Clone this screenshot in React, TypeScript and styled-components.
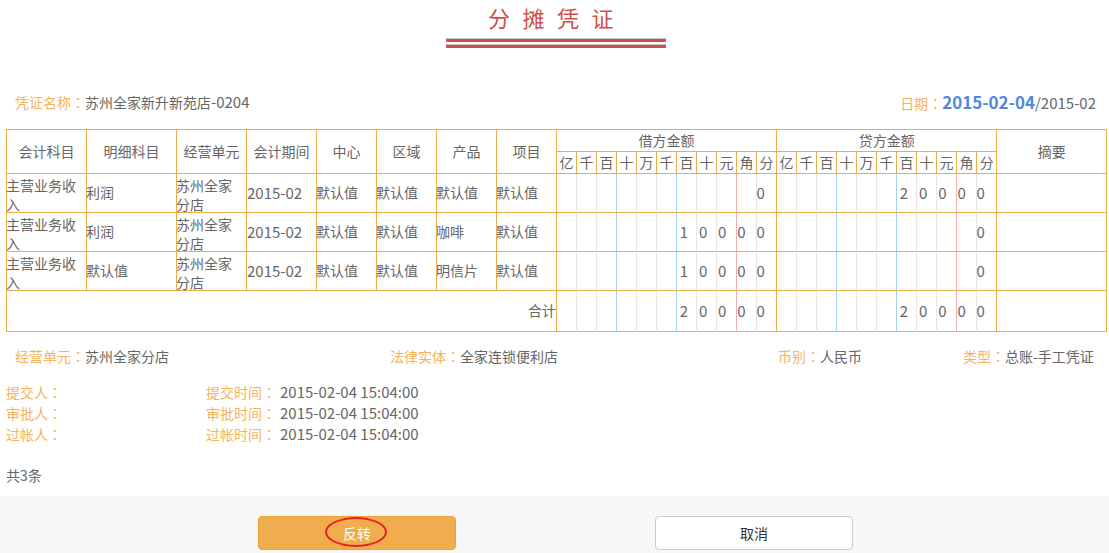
import styled, { createGlobalStyle } from "styled-components";

const ORANGE = "#f0ad45";
const LABEL = "#f7b35c";
const TEXT = "#666";

const GlobalStyle = createGlobalStyle`
  html, body {
    margin: 0;
    padding: 0;
    background: #fff;
  }
  body {
    font-family: "Noto Sans CJK SC", "Liberation Sans", sans-serif;
    font-size: 14px;
    color: ${TEXT};
  }
`;

const digitNames = ["亿", "千", "百", "十", "万", "千", "百", "十", "元", "角", "分"];

type voucherRow = {
  subject: string;
  detail: string;
  product: string;
  debit: string[];
  credit: string[];
};

const pad = (digits: string) => {
  const cells = new Array(11 - digits.length).fill("");
  return [...cells, ...digits.split("")];
};

const rows: voucherRow[] = [
  { subject: "主营业务收入", detail: "利润", product: "默认值", debit: pad("0"), credit: pad("20000") },
  { subject: "主营业务收入", detail: "利润", product: "咖啡", debit: pad("10000"), credit: pad("0") },
  { subject: "主营业务收入", detail: "默认值", product: "明信片", debit: pad("10000"), credit: pad("0") },
];

const columnWidths = [80, 90, 70, 70, 60, 60, 60, 60];

function FieldLabel({ text }: { text: string }) {
  return (
    <Label>
      {text}
      <Colon>：</Colon>
    </Label>
  );
}

function AmountCells({ digits }: { digits: string[] }) {
  return (
    <>
      {digits.map((digit, i) => (
        <AmountCell key={i} $index={i}>
          {digit}
        </AmountCell>
      ))}
    </>
  );
}

function App() {
  return (
    <Page>
      <GlobalStyle />
      <TitleBlock>
        <Title>分摊凭证</Title>
        <TitleRule />
        <TitleRule />
      </TitleBlock>

      <VoucherMeta>
        <div>
          <FieldLabel text="凭证名称" />
          苏州全家新升新苑店<Num>-0204</Num>
        </div>
        <div>
          <FieldLabel text="日期" />
          <DateValue>2015-02-04</DateValue>
          <Num>/2015-02</Num>
        </div>
      </VoucherMeta>

      <VoucherTable>
        <colgroup>
          {columnWidths.map((w, i) => (
            <col key={i} style={{ width: w }} />
          ))}
          {new Array(22).fill(0).map((_, i) => (
            <col key={i} style={{ width: 20 }} />
          ))}
          <col style={{ width: 110 }} />
        </colgroup>
        <thead>
          <tr>
            {["会计科目", "明细科目", "经营单元", "会计期间", "中心", "区域", "产品", "项目"].map((h) => (
              <HeadCell key={h} rowSpan={2}>
                {h}
              </HeadCell>
            ))}
            <GroupCell colSpan={11}>借方金额</GroupCell>
            <GroupCell colSpan={11}>贷方金额</GroupCell>
            <HeadCell rowSpan={2}>摘要</HeadCell>
          </tr>
          <tr>
            {[...digitNames, ...digitNames].map((name, i) => (
              <DigitHead key={i}>{name}</DigitHead>
            ))}
          </tr>
        </thead>
        <tbody>
          {rows.map((row, i) => (
            <DataRow key={i}>
              <BodyCell>
                <WrapText>{row.subject}</WrapText>
              </BodyCell>
              <BodyCell>{row.detail}</BodyCell>
              <BodyCell>
                <WrapText>苏州全家分店</WrapText>
              </BodyCell>
              <PeriodCell>
                <Num>2015-02</Num>
              </PeriodCell>
              <BodyCell>默认值</BodyCell>
              <BodyCell>默认值</BodyCell>
              <BodyCell>{row.product}</BodyCell>
              <BodyCell>默认值</BodyCell>
              <AmountCells digits={row.debit} />
              <AmountCells digits={row.credit} />
              <BodyCell />
            </DataRow>
          ))}
          <TotalRow>
            <TotalLabel colSpan={8}>合计</TotalLabel>
            <AmountCells digits={pad("20000")} />
            <AmountCells digits={pad("20000")} />
            <BodyCell />
          </TotalRow>
        </tbody>
      </VoucherTable>

      <InfoRow>
        <div>
          <FieldLabel text="经营单元" />
          苏州全家分店
        </div>
        <div>
          <FieldLabel text="法律实体" />
          全家连锁便利店
        </div>
        <div>
          <FieldLabel text="币别" />
          人民币
        </div>
        <div>
          <FieldLabel text="类型" />
          总账-手工凭证
        </div>
      </InfoRow>

      <AuditList>
        {["提交", "审批", "过帐"].map((action) => (
          <AuditRow key={action}>
            <FieldLabel text={`${action}人`} />
            <div>
              <FieldLabel text={`${action}时间`} />
              <AuditTime>2015-02-04 15:04:00</AuditTime>
            </div>
          </AuditRow>
        ))}
      </AuditList>

      <RecordCount>共3条</RecordCount>

      <Footer>
        <PrimaryButton>
          反转
          <Annotation />
        </PrimaryButton>
        <CancelButton>取消</CancelButton>
      </Footer>
    </Page>
  );
}

export default App;

const Page = styled.div`
  width: 1109px;
  height: 553px;
  overflow: hidden;
  display: flex;
  flex-direction: column;
`;

const TitleBlock = styled.div`
  width: 220px;
  margin-left: 446px;
  display: flex;
  flex-direction: column;
`;

const Title = styled.h1`
  margin: 0;
  height: 38px;
  font-size: 22px;
  line-height: 35px;
  font-weight: 400;
  letter-spacing: 12.5px;
  padding-left: 42px;
  white-space: nowrap;
  color: #cf4d4b;
`;

const TitleRule = styled.div`
  height: 3px;
  background: #c9504d;
  border-top: 1px solid #c8c8c8;
  margin-bottom: 2px;
`;

const VoucherMeta = styled.div`
  margin-top: 39px;
  height: 24px;
  padding: 0 13px 0 15px;
  display: flex;
  justify-content: space-between;
  align-items: center;
`;

const Label = styled.span`
  color: ${LABEL};
`;

const Colon = styled.span`
  font-family: "Noto Sans CJK TC", sans-serif;
`;

const Num = styled.span`
  font-size: 15px;
`;

const DateValue = styled.span`
  font-size: 17px;
  font-weight: 700;
  color: #4f88dc;
`;

const VoucherTable = styled.table`
  margin: 16px 0 0 6px;
  width: 1101px;
  table-layout: fixed;
  border-collapse: separate;
  border-spacing: 0;
  border-top: 1px solid ${ORANGE};
  border-left: 1px solid ${ORANGE};
`;

const HeadCell = styled.th`
  border-right: 1px solid ${ORANGE};
  border-bottom: 1px solid ${ORANGE};
  padding: 0 0 1px;
  font-weight: 400;
  text-align: center;
`;

const GroupCell = styled(HeadCell)`
  height: 20px;
`;

const DigitHead = styled(HeadCell)`
  height: 20px;
`;

const DataRow = styled.tr`
  height: 39px;
`;

const TotalRow = styled.tr`
  height: 41px;
`;

const BodyCell = styled.td`
  border-right: 1px solid ${ORANGE};
  border-bottom: 1px solid ${ORANGE};
  padding: 0 0 1px;
  line-height: 19px;
  word-break: break-all;
  text-indent: -1px;
`;

const PeriodCell = styled(BodyCell)`
  text-indent: 0;
`;

const WrapText = styled.div`
  box-sizing: border-box;
  height: 37px;
  margin: 0 1px 0 -1px;
  padding-top: 1.5px;
  line-height: 19.5px;
  text-indent: 0;
`;

const TotalLabel = styled(BodyCell)`
  text-align: right;
  text-indent: 0;
`;

const amountLine = (index: number) => {
  if (index === 2 || index === 5) return "#9fd3f2";
  if (index === 8) return "#f2b0b0";
  if (index === 10) return ORANGE;
  return "#e6e6e6";
};

// the digits in the reference sit a little tighter than the 20px cells
const AmountCell = styled.td<{ $index: number }>`
  padding: 0 0 1px;
  font-size: 15px;
  border-bottom: 1px solid ${ORANGE};
  border-right: 1px solid ${({ $index }) => amountLine($index)};
  text-indent: ${({ $index }) => (10 - $index) * 0.8 - 0.5 + "px"};
`;

const InfoRow = styled.div`
  margin-top: 12px;
  padding-left: 15px;
  height: 24px;
  display: grid;
  grid-template-columns: 375px 388px 185px 1fr;
  align-items: center;
`;

const AuditList = styled.div`
  margin-top: 13px;
  padding-left: 6px;
  display: flex;
  flex-direction: column;
`;

const AuditRow = styled.div`
  height: 21px;
  display: grid;
  grid-template-columns: 200px 1fr;
  align-items: center;
`;

const AuditTime = styled.span`
  margin-left: 4px;
  font-size: 15px;
`;

const RecordCount = styled.div`
  margin-top: 21px;
  padding-left: 6px;
  height: 21px;
  line-height: 21px;
`;

const Footer = styled.div`
  margin-top: 10px;
  flex: 1;
  background: #f7f7f5;
  padding: 20px 0 0 258px;
  display: flex;
  align-items: flex-start;
  gap: 199px;
`;

const FooterButton = styled.button`
  position: relative;
  width: 198px;
  height: 34px;
  padding: 0;
  border-radius: 4px;
  font-family: inherit;
  font-size: 14px;
`;

const PrimaryButton = styled(FooterButton)`
  background: #f0ad4e;
  border: 1px solid #eea236;
  color: #fff;
`;

const CancelButton = styled(FooterButton)`
  background: #fff;
  border: 1px solid #ccc;
  color: #333;
`;

const Annotation = styled.span`
  position: absolute;
  left: 66px;
  top: 0;
  width: 58px;
  height: 26px;
  border: 2px solid #ee1c25;
  border-radius: 50%;
`;
